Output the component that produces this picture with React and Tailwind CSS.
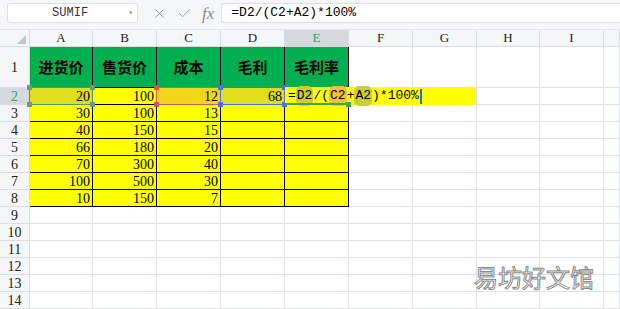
import React from 'react';
import { X, Check } from 'lucide-react';

const COLS = ['A', 'B', 'C', 'D', 'E', 'F', 'G', 'H', 'I', ''];
const HEADERS = ['进货价', '售货价', '成本', '毛利', '毛利率'];
const DATA = [
  [20, 100, 12, 68],
  [30, 100, 13],
  [40, 150, 15],
  [66, 180, 20],
  [70, 300, 40],
  [100, 500, 30],
  [10, 150, 7],
];

const serif = "font-['Liberation_Serif','DejaVu_Serif',serif]";
const mono = "font-['Liberation_Mono','DejaVu_Sans_Mono',monospace]";
const cjk = "font-['Noto_Sans_CJK_SC','Noto_Sans',sans-serif]";

const RefBox = ({ border, handle }) => (
  <div className={`pointer-events-none absolute -left-px -top-px -right-px -bottom-px border z-10 ${border}`}>
    <span className={`absolute -left-[3px] -top-[3px] w-[5px] h-[5px] ${handle}`} />
    <span className={`absolute -right-[3px] -top-[3px] w-[5px] h-[5px] ${handle}`} />
    <span className={`absolute -left-[3px] -bottom-[3px] w-[5px] h-[5px] ${handle}`} />
    <span className={`absolute -right-[3px] -bottom-[3px] w-[5px] h-[5px] ${handle}`} />
  </div>
);

const Pill = ({ bg, children }) => (
  <span className={`rounded-[5px] px-px ${bg}`}>{children}</span>
);

export default function App() {
  const rows = [];

  // column header row
  rows.push(
    <div key="corner" className="h-[17px] bg-[#f5f6f7] border-r border-b border-[#d8dbe0] flex items-end justify-end pr-[3px] pb-[2px]">
      <div className="w-0 h-0 border-l-[9px] border-l-transparent border-b-[9px] border-b-[#c3c5c8]" />
    </div>
  );
  COLS.forEach((c) => {
    const sel = c === 'E';
    rows.push(
      <div
        key={`h${c}`}
        className={`h-[17px] border-r border-b border-[#d8dbe0] flex items-center justify-center text-[13px] ${serif} ${
          sel ? 'bg-[#d5d8dc] text-[#2ea36a]' : 'bg-[#f5f6f7] text-[#222]'
        }`}
      >
        {c}
      </div>
    );
  });

  for (let r = 1; r <= 14; r++) {
    const selRow = r === 2;
    rows.push(
      <div
        key={`r${r}`}
        className={`${r === 1 ? 'h-[41px]' : 'h-[17px]'} border-r border-b border-[#d8dbe0] flex items-center justify-center text-[14px] ${serif} ${
          selRow ? 'bg-[#d5d8dc] text-[#2ea36a]' : 'bg-[#f5f6f7] text-[#222]'
        }`}
      >
        {r}
      </div>
    );
    for (let c = 0; c < 10; c++) {
      const inTable = r <= 8 && c <= 4;
      const key = `c${r}-${c}`;
      if (r === 1 && c <= 4) {
        rows.push(
          <div key={key} className={`h-[41px] bg-[#00b050] border-r border-b border-black flex items-center justify-center text-[15px] font-bold text-black ${cjk}`}>
            {HEADERS[c]}
          </div>
        );
        continue;
      }
      if (r === 1) {
        rows.push(<div key={key} className="h-[41px] border-r border-b border-[#dce0e8]" />);
        continue;
      }
      if (r === 2 && c === 4) {
        // cell in edit mode, its text runs over F2:G2
        rows.push(
          <div key={key} className="relative h-[17px] bg-[#ffff00] border-r border-b border-black">
            <div className={`absolute left-0 -top-px h-[18px] w-[191px] bg-[#ffff00] z-20 flex items-center pl-[3px] text-[13px] text-black ${mono}`}>
              <span>=</span>
              <Pill bg="bg-[#cccc3a]">D2</Pill>
              <span>/(</span>
              <Pill bg="bg-[#f0c23c]">C2</Pill>
              <span>+</span>
              <Pill bg="bg-[#cccc3a]">A2</Pill>
              <span>)*100%</span>
              <span className="ml-px w-[2px] h-[15px] bg-[#3b5fd0]" />
            </div>
            <div className="absolute left-0 -bottom-px w-[64px] h-[2px] bg-[#3ea35e] z-30" />
            <span className="absolute left-[61px] -bottom-[3px] w-[5px] h-[5px] bg-[#3ea35e] z-30" />
          </div>
        );
        continue;
      }
      const val = r >= 2 && r <= 8 ? DATA[r - 2][c] : undefined;
      let bg = inTable ? 'bg-[#ffff00]' : 'bg-white';
      let overlay = null;
      if (r === 2 && c === 0) {
        bg = 'bg-[#dede1e]';
        overlay = <RefBox border="border-[#4f9a63]" handle="bg-[#6b9c78]" />;
      }
      if (r === 2 && c === 2) {
        bg = 'bg-[#f2d41a]';
        overlay = <RefBox border="border-[#d45858]" handle="bg-[#d45858]" />;
      }
      if (r === 2 && c === 3) {
        bg = 'bg-[#dede1e]';
        overlay = <RefBox border="border-[#4a74dc]" handle="bg-[#4a74dc]" />;
      }
      rows.push(
        <div
          key={key}
          className={`relative h-[17px] ${bg} border-r border-b ${inTable ? 'border-black' : 'border-[#dce0e8]'} flex items-center justify-end pr-[2px] text-[14px] text-black ${serif}`}
        >
          {val !== undefined ? val : ''}
          {overlay}
        </div>
      );
    }
  }

  return (
    <div className="relative w-[620px] h-[309px] overflow-hidden bg-white">
      {/* formula bar */}
      <div className="h-[30px] bg-[#f5f6f7] border-b border-[#e2e4e7] flex items-start pt-[3px]">
        <div className={`ml-[7px] w-[131px] h-[20px] bg-white border border-[#dcdfe3] rounded-[3px] flex items-center text-[12px] text-[#333] ${mono}`}>
          <span className="flex-1 text-center pl-[4px]">SUMIF</span>
          <span className="text-[8px] text-[#888] pr-[4px]">▾</span>
        </div>
        <div className="flex items-center h-[20px] ml-[14px] gap-[10px] text-[#8a8a8a]">
          <X size={15} strokeWidth={1.3} />
          <Check size={15} strokeWidth={1.3} />
          <span className={`italic text-[17px] leading-none ${serif}`}>fx</span>
        </div>
        <div className={`ml-[7px] flex-1 h-[20px] bg-white border border-r-0 border-[#dcdfe3] rounded-l-[3px] flex items-center pl-[9px] text-[13px] text-black ${mono}`}>
          =D2/(C2+A2)*100%
        </div>
      </div>

      {/* sheet grid */}
      <div className="grid grid-cols-[30px_63px_64px_64px_64px_64px_64px_64px_63px_64px_16px]">
        {rows}
      </div>

      {/* watermark */}
      <div className={`absolute left-[474px] top-[265px] text-[24px] leading-none text-white [-webkit-text-stroke:1px_#8a8a8a] ${cjk}`}>
        易坊好文馆
      </div>
    </div>
  );
}
